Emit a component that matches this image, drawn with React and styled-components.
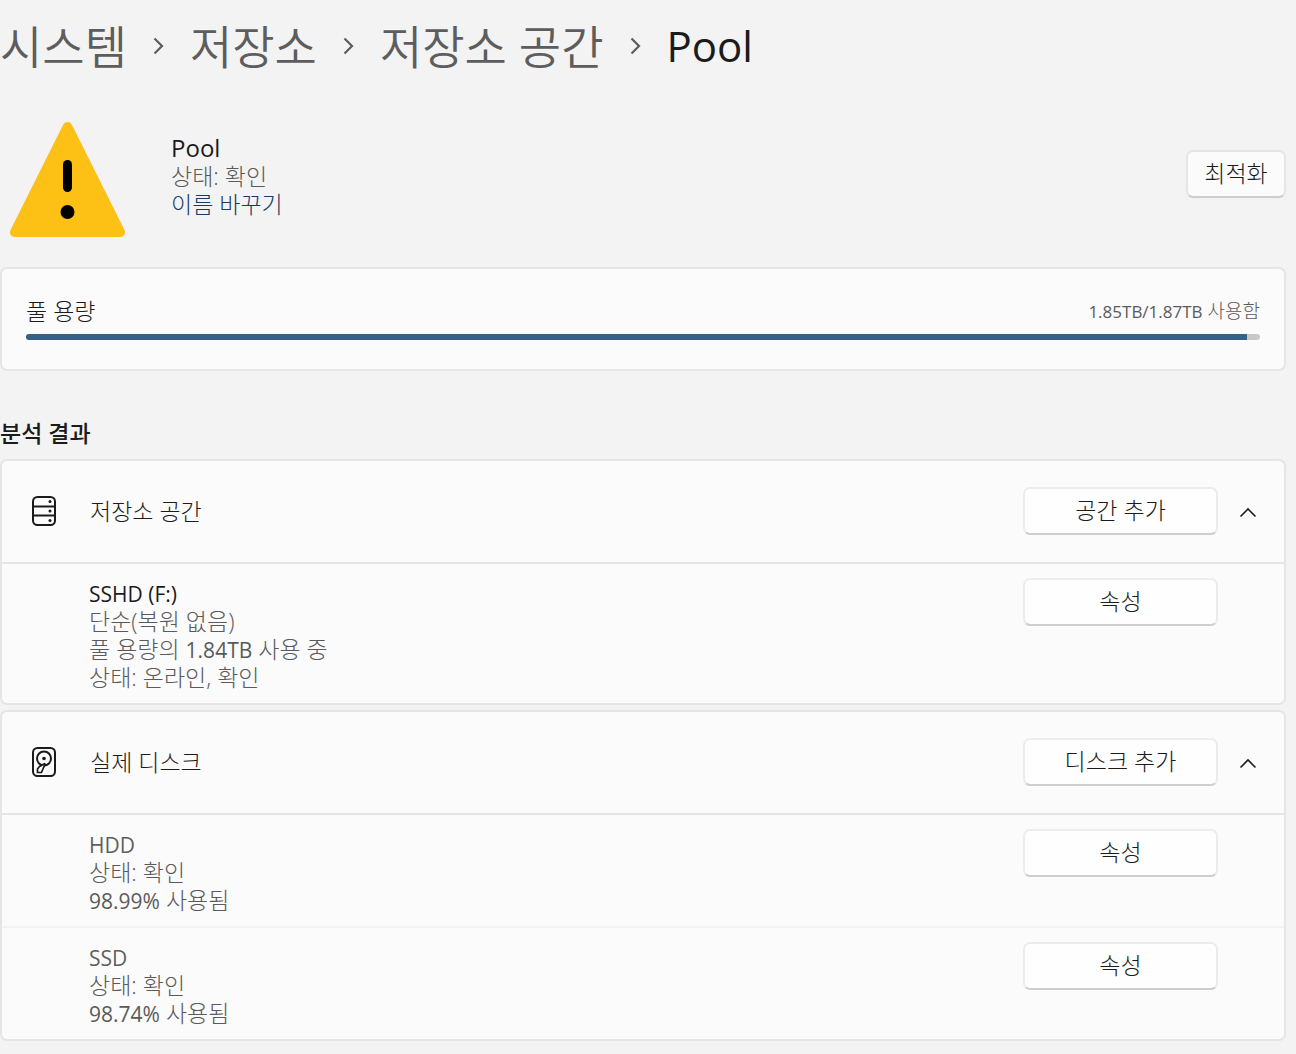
import { useState } from 'react';
import { styled, createGlobalStyle } from 'styled-components';

//#region Styled Components:
const GlobalStyle = createGlobalStyle`
  *, *::before, *::after {
    box-sizing: border-box;
  }

  body {
    margin: 0;
    background: #f3f3f3;
    color: #1b1b1b;
    font-family: "Open Sans", "Noto Sans CJK KR", sans-serif;
    font-size: 23px;
    font-weight: 300;
    line-height: 28px;
  }

  h1, h2, h3, p, ol, ul {
    margin: 0;
    padding: 0;
    font: inherit;
    list-style: none;
  }
`;

const Page = styled.div`
  padding: 16px 10px 12px 0;
`;

const Crumbs = styled.ol`
  display: flex;
  align-items: center;
  font-size: 46px;
  font-weight: 350;
  line-height: 60px;
`;

const Crumb = styled.li`
  display: flex;
  align-items: center;
  white-space: nowrap;

  svg {
    margin: 0 26px;
    color: #5d5d5d;
  }
`;

const CrumbLink = styled.a`
  color: #5d5d5d;
  text-decoration: none;
`;

const CurrentCrumb = styled.h1`
  font-size: 42px;
  font-weight: 400;
`;

const Summary = styled.section`
  display: flex;
  align-items: center;
  padding: 46px 0 30px 10px;
`;

const SummaryBody = styled.div`
  display: flex;
  flex: 1;
  align-items: center;
  justify-content: space-between;
  margin-left: 46px;
  padding-bottom: 12px;
`;

const SummaryText = styled.div`
  padding-top: 4px;
`;

const PoolName = styled.h2`
  font-size: 24px;
  font-weight: 500;
`;

const Muted = styled.p`
  color: #5a5a5a;
`;

const RenameLink = styled.a`
  color: #1a3a62;
  text-decoration: none;
`;

// digits and units run wide next to Hangul, so they are set a step smaller
const Figure = styled.span`
  font-size: ${({ $small }) => ($small ? '17px' : '21px')};
  font-weight: 400;
  line-height: 1;
`;

const Button = styled.button`
  width: ${({ $wide }) => ($wide ? '195px' : '100px')};
  height: 48px;
  flex: none;
  padding: 0 0 2px;
  border: 2px solid ${({ $wide }) => ($wide ? '#ececec' : '#e5e5e5')};
  border-bottom-color: #cecece;
  border-radius: 7px;
  background: ${({ $wide }) => ($wide ? '#fefefe' : '#fbfbfb')};
  color: #1b1b1b;
  font: inherit;
`;

const Card = styled.section`
  border: 2px solid #e5e5e5;
  border-radius: 7px;
  background: #fbfbfb;

  & + & {
    margin-top: 5px;
  }
`;

const CapacityCard = styled(Card)`
  padding: 28px 24px 29px;
`;

const CapacityLabels = styled.div`
  display: flex;
  justify-content: space-between;
  margin-bottom: 9px;
`;

const Usage = styled.span`
  color: #5a5a5a;
  font-size: 19px;
`;

const Track = styled.div`
  height: 6px;
  overflow: hidden;
  border-radius: 4px;
  background: #c8c8c8;
`;

const Fill = styled.div`
  height: 100%;
  background: #376086;
`;

const SectionTitle = styled.h2`
  margin: 48px 0 12px;
  font-weight: 500;
`;

const CardHeader = styled.div`
  display: flex;
  align-items: center;
  height: 101px;
  padding: 0 18px 2px 28px;
`;

const CardTitle = styled.h3`
  flex: 1;
  margin-left: 32px;
`;

const Toggle = styled.button`
  display: flex;
  align-items: center;
  justify-content: center;
  width: 36px;
  height: 36px;
  margin-left: 12px;
  padding: 2px 0 0;
  border: 0;
  background: none;
  color: #1b1b1b;

  svg {
    transform: ${({ $open }) => ($open ? 'none' : 'rotate(180deg)')};
  }
`;

const Row = styled.li`
  display: flex;
  align-items: flex-start;
  justify-content: space-between;
  padding: 14px 66px 12px 87px;
  border-top: 2px solid #f2f2f2;

  &:first-child {
    border-top-color: #e5e5e5;
  }
`;

const RowText = styled.div`
  padding-top: 3px;
`;

const RowName = styled.p`
  color: ${({ $strong }) => ($strong ? '#1b1b1b' : '#5f5f5f')};
  font-size: 21px;
  font-weight: 400;
  line-height: 26px;
`;
//#endregion

//#region Icons:
function CrumbArrow() {
  return (
    <svg width="11" height="18" viewBox="0 0 11 18" fill="none" stroke="currentColor" strokeWidth="2.200" aria-hidden="true">
      <path d="M1.500 1.500 9 9 1.500 16.500" />
    </svg>
  );
}

function WarningIcon() {
  return (
    <svg width="115" height="115" viewBox="0 0 115 115" aria-hidden="true">
      <path d="M53 3Q54.500 0 57.500 0Q60.500 0 62 3L114.500 108Q116.500 114 110.500 115H4.500Q-1.500 114 .5 108Z" fill="#fdc116" />
      <rect x="53" y="38" width="9" height="32" rx="4.500" />
      <circle cx="57.500" cy="90" r="7" />
    </svg>
  );
}

function StorageIcon() {
  return (
    <svg width="28" height="32" viewBox="0 0 28 32" fill="none" stroke="#1b1b1b" strokeWidth="2" aria-hidden="true">
      <rect x="3" y="2" width="22" height="28" rx="4.500" />
      <path d="M3 11.500h22M3 20.500h22" />
      <g fill="#1b1b1b" stroke="none">
        <circle cx="20" cy="6.500" r="1.500" />
        <circle cx="20" cy="16" r="1.500" />
        <circle cx="20" cy="25.500" r="1.500" />
      </g>
    </svg>
  );
}

function DiskIcon() {
  return (
    <svg width="28" height="32" viewBox="0 0 28 32" fill="none" stroke="#1b1b1b" strokeWidth="2" aria-hidden="true">
      <rect x="3" y="2" width="22" height="28" rx="4.500" />
      <circle cx="14" cy="12.500" r="7" />
      <circle cx="14" cy="12.500" r="1.800" fill="#1b1b1b" stroke="none" />
      <path d="M15 17.500 9.500 20.500 7.500 23V26.500H11.500L13.500 21.500 15.500 17.500" fill="#fbfbfb" strokeWidth="1.700" />
    </svg>
  );
}

function ChevronUp() {
  return (
    <svg width="18" height="12" viewBox="0 0 18 12" fill="none" stroke="currentColor" strokeWidth="1.600" aria-hidden="true">
      <path d="M1.500 10.500 9 3l7.500 7.500" />
    </svg>
  );
}
//#endregion

const CRUMBS = ['시스템', '저장소', '저장소 공간'];

const USED_TB = 1.85;
const TOTAL_TB = 1.87;

const GROUPS = [
  {
    title: '저장소 공간',
    action: '공간 추가',
    icon: <StorageIcon />,
    rows: [
      {
        name: 'SSHD (F:)',
        strong: true,
        details: [
          '단순(복원 없음)',
          <>풀 용량의 <Figure>1.84TB</Figure> 사용 중</>,
          '상태: 온라인, 확인',
        ],
      },
    ],
  },
  {
    title: '실제 디스크',
    action: '디스크 추가',
    icon: <DiskIcon />,
    rows: [
      { name: 'HDD', details: ['상태: 확인', <><Figure>98.99%</Figure> 사용됨</>] },
      { name: 'SSD', details: ['상태: 확인', <><Figure>98.74%</Figure> 사용됨</>] },
    ],
  },
];

function Group({ title, action, icon, rows }) {
  const [open, setOpen] = useState(true);

  return (
    <Card>
      <CardHeader>
        {icon}
        <CardTitle>{title}</CardTitle>
        <Button type="button" $wide>{action}</Button>
        <Toggle
          type="button"
          $open={open}
          aria-expanded={open}
          aria-label={title}
          onClick={() => setOpen((prev) => !prev)}
        >
          <ChevronUp />
        </Toggle>
      </CardHeader>
      {open && (
        <ul>
          {rows.map((row) => (
            <Row key={row.name}>
              <RowText>
                <RowName $strong={row.strong}>{row.name}</RowName>
                {row.details.map((line, index) => (
                  <Muted key={index}>{line}</Muted>
                ))}
              </RowText>
              <Button type="button" $wide>속성</Button>
            </Row>
          ))}
        </ul>
      )}
    </Card>
  );
}

export default function App() {
  return (
    <Page>
      <GlobalStyle />
      <nav>
        <Crumbs>
          {CRUMBS.map((crumb) => (
            <Crumb key={crumb}>
              <CrumbLink href="#">{crumb}</CrumbLink>
              <CrumbArrow />
            </Crumb>
          ))}
          <Crumb>
            <CurrentCrumb>Pool</CurrentCrumb>
          </Crumb>
        </Crumbs>
      </nav>

      <main>
        <Summary>
          <WarningIcon />
          <SummaryBody>
            <SummaryText>
              <PoolName>Pool</PoolName>
              <Muted>상태: 확인</Muted>
              <RenameLink href="#">이름 바꾸기</RenameLink>
            </SummaryText>
            <Button type="button">최적화</Button>
          </SummaryBody>
        </Summary>

        <CapacityCard>
          <CapacityLabels>
            <span id="capacity-label">풀 용량</span>
            <Usage>
              <Figure $small>{USED_TB}TB/{TOTAL_TB}TB</Figure> 사용함
            </Usage>
          </CapacityLabels>
          <Track
            role="progressbar"
            aria-labelledby="capacity-label"
            aria-valuenow={USED_TB}
            aria-valuemin={0}
            aria-valuemax={TOTAL_TB}
          >
            <Fill style={{ width: `${(USED_TB / TOTAL_TB) * 100}%` }} />
          </Track>
        </CapacityCard>

        <SectionTitle>분석 결과</SectionTitle>
        {GROUPS.map((group) => (
          <Group key={group.title} {...group} />
        ))}
      </main>
    </Page>
  );
}
